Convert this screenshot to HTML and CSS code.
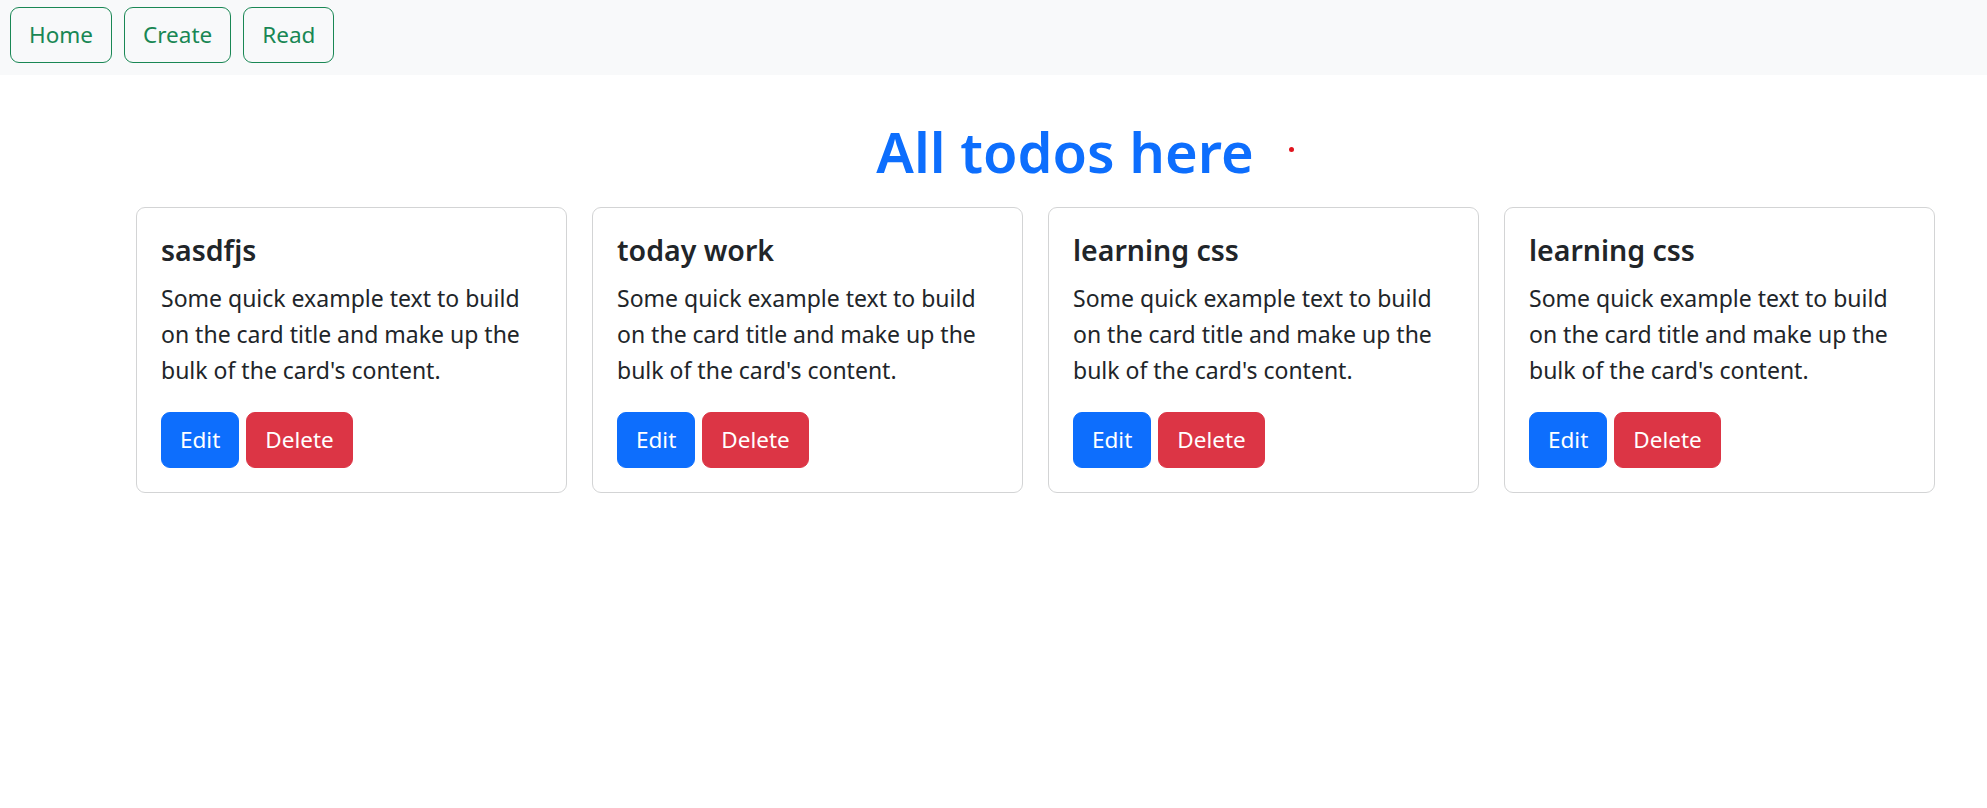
FILE: index.html
```html
<!DOCTYPE html>
<html lang="en">
<head>
<meta charset="utf-8">
<title>Todos</title>
<link rel="stylesheet" href="styles.css">
</head>
<body>
<nav class="navbar">
  <a class="btn btn-outline">Home</a>
  <a class="btn btn-outline">Create</a>
  <a class="btn btn-outline">Read</a>
</nav>
<main class="main">
  <h1 class="heading">All todos here<span class="dot"></span></h1>
  <div class="cards">
    <div class="card">
      <h5 class="card-title">sasdfjs</h5>
      <p class="card-text">Some quick example text to build on the card title and make up the bulk of the card's content.</p>
      <div class="actions"><a class="btn btn-primary">Edit</a><a class="btn btn-danger">Delete</a></div>
    </div>
    <div class="card">
      <h5 class="card-title">today work</h5>
      <p class="card-text">Some quick example text to build on the card title and make up the bulk of the card's content.</p>
      <div class="actions"><a class="btn btn-primary">Edit</a><a class="btn btn-danger">Delete</a></div>
    </div>
    <div class="card">
      <h5 class="card-title">learning css</h5>
      <p class="card-text">Some quick example text to build on the card title and make up the bulk of the card's content.</p>
      <div class="actions"><a class="btn btn-primary">Edit</a><a class="btn btn-danger">Delete</a></div>
    </div>
    <div class="card">
      <h5 class="card-title">learning css</h5>
      <p class="card-text">Some quick example text to build on the card title and make up the bulk of the card's content.</p>
      <div class="actions"><a class="btn btn-primary">Edit</a><a class="btn btn-danger">Delete</a></div>
    </div>
  </div>
</main>
</body>
</html>
```
FILE: styles.css
```css
* { box-sizing: border-box; }
body {
  margin: 0;
  font-family: "Noto Sans", "Open Sans", sans-serif;
  font-size: 23px;
  line-height: 36px;
  color: #212529;
  background: #fff;
}
.navbar {
  display: flex;
  gap: 12px;
  background: #f8f9fa;
  padding: 7px 10px 12px;
}
.btn {
  display: inline-block;
  font-size: 22.5px;
  line-height: 36px;
  padding: 9px 18px;
  border: 1px solid transparent;
  border-radius: 9px;
  text-decoration: none;
  cursor: pointer;
}
.btn-outline {
  color: #198754;
  border-color: #198754;
}
.btn-primary {
  background: #0d6efd;
  border-color: #0d6efd;
  color: #fff;
}
.btn-danger {
  background: #dc3545;
  border-color: #dc3545;
  color: #fff;
}
.main {
  padding-left: 136px;
}
.heading {
  position: relative;
  margin: 43px 0 23px;
  padding-left: 7px;
  text-align: center;
  font-size: 56px;
  line-height: 66px;
  font-weight: 600;
  color: #0d6efd;
}
.dot {
  position: absolute;
  left: 1153px;
  top: 29px;
  width: 5px;
  height: 5px;
  border-radius: 50%;
  background: #e0141e;
}
.cards {
  display: flex;
  gap: 25px;
}
.card {
  width: 431px;
  border: 1px solid #d3d4d5;
  border-radius: 9px;
  padding: 24px;
}
.card-title {
  margin: 0 0 12px;
  font-size: 28.5px;
  line-height: 36px;
  font-weight: 600;
}
.card-text {
  margin: 0 0 24px;
  padding-right: 10px;
}
.actions {
  display: flex;
  gap: 7px;
}
```
